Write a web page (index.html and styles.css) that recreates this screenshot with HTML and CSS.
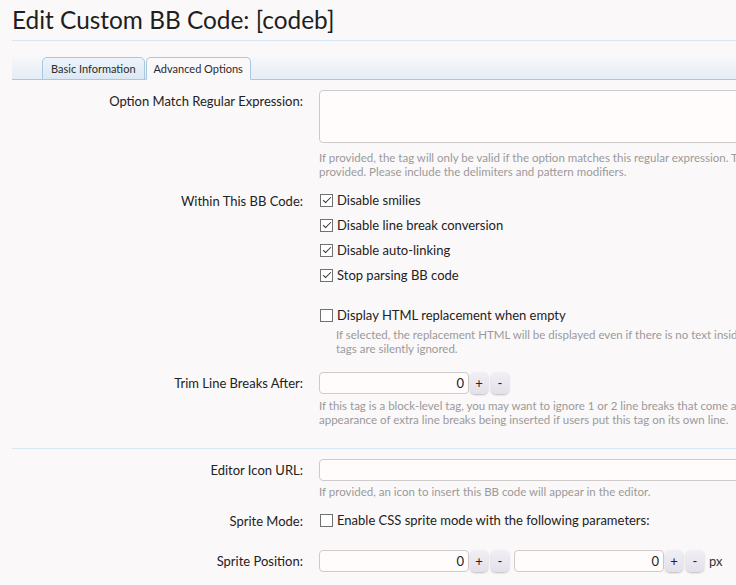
FILE: index.html
```html
<!DOCTYPE html>
<html lang="en">
  <head>
    <meta charset="UTF-8">
    <title>Edit Custom BB Code: [codeb]</title>
    <link rel="stylesheet" href="styles.css">
  </head>
  <body>

    <div class="page">
      <div class="title-bar">
        <h1>Edit Custom BB Code: [codeb]</h1>
      </div>

      <ul class="tabs">
        <li class="tab">Basic Information</li>
        <li class="tab active">Advanced Options</li>
      </ul>

      <form class="form">
        <dl class="row">
          <dt>Option Match Regular Expression:</dt>
          <dd>
            <textarea class="field wide" rows="3"></textarea>
            <p class="hint">If provided, the tag will only be valid if the option matches this regular expression. This will be ignored if no option is provided. Please include the delimiters and pattern modifiers.</p>
          </dd>
        </dl>

        <dl class="row check-row">
          <dt class="check-label">Within This BB Code:</dt>
          <dd>
            <ul class="checks">
              <li><label><input type="checkbox" checked> Disable smilies</label></li>
              <li><label><input type="checkbox" checked> Disable line break conversion</label></li>
              <li><label><input type="checkbox" checked> Disable auto-linking</label></li>
              <li><label><input type="checkbox" checked> Stop parsing BB code</label></li>
              <li class="spaced">
                <label><input type="checkbox"> Display HTML replacement when empty</label>
                <p class="hint indent">If selected, the replacement HTML will be displayed even if there is no text inside the BB code. Normally, empty BB code tags are silently ignored.</p>
              </li>
            </ul>
          </dd>
        </dl>

        <dl class="row">
          <dt>Trim Line Breaks After:</dt>
          <dd>
            <div class="spin">
              <input class="field num" type="text" value="0">
              <button type="button" class="spin-btn">+</button>
              <button type="button" class="spin-btn">-</button>
            </div>
            <p class="hint">If this tag is a block-level tag, you may want to ignore 1 or 2 line breaks that come after it. This will prevent the appearance of extra line breaks being inserted if users put this tag on its own line.</p>
          </dd>
        </dl>

        <hr class="divider">

        <dl class="row">
          <dt>Editor Icon URL:</dt>
          <dd>
            <input class="field wide" type="text">
            <p class="hint">If provided, an icon to insert this BB code will appear in the editor.</p>
          </dd>
        </dl>

        <dl class="row check-row">
          <dt class="check-label">Sprite Mode:</dt>
          <dd>
            <ul class="checks">
              <li><label><input type="checkbox"> Enable CSS sprite mode with the following parameters:</label></li>
            </ul>
          </dd>
        </dl>

        <dl class="row">
          <dt>Sprite Position:</dt>
          <dd>
            <div class="spin">
              <input class="field num" type="text" value="0">
              <button type="button" class="spin-btn">+</button>
              <button type="button" class="spin-btn">-</button>
              <input class="field num gap" type="text" value="0">
              <button type="button" class="spin-btn">+</button>
              <button type="button" class="spin-btn">-</button>
              <span class="unit">px</span>
            </div>
          </dd>
        </dl>
      </form>
    </div>

  </body>
</html>
```
FILE: styles.css
```css
* {
  box-sizing: border-box;
  margin: 0;
  padding: 0;
}

html, body {
  overflow: hidden;
}

body {
  background-color: #fbf8f9;
  font-family: Lato, "Liberation Sans", sans-serif;
  font-size: 13px;
  color: #222;
}

.page {
  width: 1000px;
  padding-left: 12px;
}

.title-bar {
  border-bottom: 1px solid #d7e6f3;
  height: 41px;
  padding-top: 5px;
}

h1 {
  font-size: 24.4px;
  font-weight: normal;
  line-height: 30px;
  color: #1e1e1e;
}

/* tabs */
.tabs {
  list-style: none;
  display: flex;
  margin-top: 13px;
  height: 26px;
  padding: 3px 0 0 30px;
  background: linear-gradient(to bottom, #fbf8f9, #e4edf6);
  border-bottom: 1px solid #a9c7e1;
}

.tab {
  font-size: 11px;
  color: #2b2b2b;
  padding: 0 8px;
  line-height: 21px;
  height: 23px;
  margin-right: 1px;
  border: 1px solid #a9c7e1;
  border-radius: 5px 5px 0 0;
  background: linear-gradient(to bottom, #eef4fa, #dbe8f4);
}

.tab.active {
  background: #fbf8f9;
  border-bottom-color: #fbf8f9;
  padding: 0 7px;
}

/* form rows */
.form {
  padding-top: 10px;
}

.row {
  display: grid;
  grid-template-columns: 291px 1fr;
  column-gap: 16px;
  margin-bottom: 10px;
}

.row dt {
  text-align: right;
  line-height: 22px;
}

.check-row {
  margin-bottom: 16px;
}

.check-label {
  padding-top: 1px;
}

.field {
  background: #fffcfb;
  border: 1px solid #cfcbcb;
  border-radius: 4px;
  font-family: inherit;
  font-size: 13px;
  color: #222;
  outline: none;
}

textarea.field {
  display: block;
  width: 500px;
  height: 53px;
  resize: none;
  margin-bottom: 8px;
}

input.wide {
  display: block;
  width: 500px;
  height: 22px;
  margin-bottom: 4px;
}

.hint {
  font-size: 11.5px;
  line-height: 14px;
  color: #9a9a9a;
  width: 600px;
}

/* checkbox lists */
.checks {
  list-style: none;
}

.checks li {
  line-height: 22px;
  margin-bottom: 3px;
}

.checks li.spaced {
  margin-top: 18px;
  margin-bottom: 0;
}

.checks label {
  display: flex;
  align-items: center;
  gap: 4px;
  padding-left: 1px;
}

.checks input {
  appearance: none;
  width: 13px;
  height: 13px;
  border: 1px solid #717171;
  background: #fff;
  position: relative;
  flex: none;
}

.checks input:checked::after {
  content: "";
  position: absolute;
  left: 2px;
  top: 2px;
  width: 7px;
  height: 3px;
  border-left: 1px solid #333;
  border-bottom: 1px solid #333;
  transform: rotate(-45deg);
}

.hint.indent {
  width: 617px;
  margin-left: 17px;
  margin-top: 2px;
}

/* spin boxes */
.spin {
  display: flex;
  align-items: center;
  height: 22px;
  margin-bottom: 5px;
}

.field.num {
  width: 150px;
  height: 22px;
  text-align: right;
  padding-right: 4px;
  margin-right: 1px;
}

.field.num.gap {
  margin-left: 2px;
}

.spin-btn {
  width: 18px;
  height: 22px;
  margin-right: 3px;
  border: none;
  border-radius: 5px;
  background: linear-gradient(to bottom, #f1eff5, #e3e0ea);
  box-shadow: 0 1px 2px rgba(0, 0, 0, 0.25);
  font-family: inherit;
  font-size: 13px;
  color: #222;
  line-height: 20px;
}

.unit {
  margin-left: 2px;
  color: #333;
}

.divider {
  border: none;
  border-top: 1px solid #d7e6f3;
  margin: 21px 0 10px;
}
```
